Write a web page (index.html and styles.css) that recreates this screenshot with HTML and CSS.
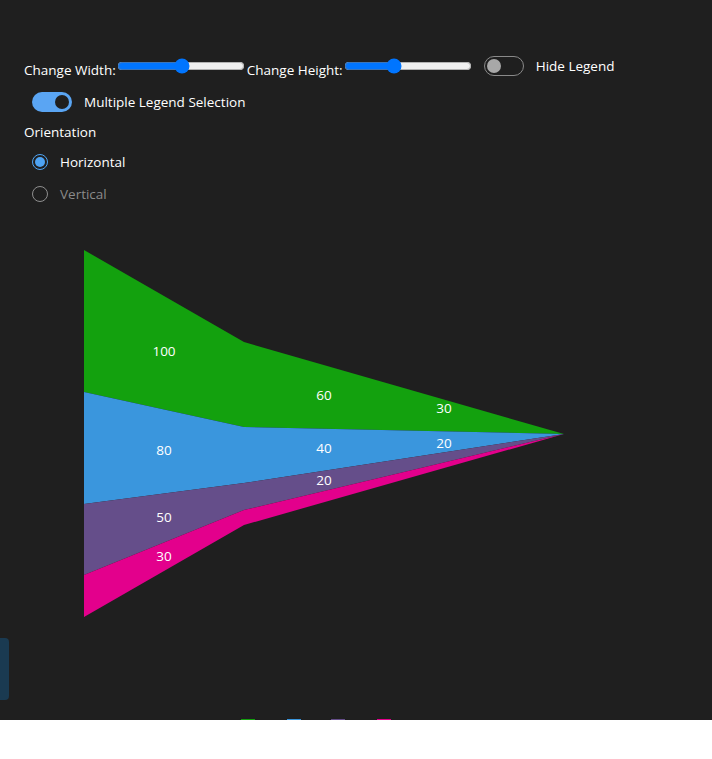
FILE: index.html
```html
<!DOCTYPE html>
<html lang="en">
<head>
<meta charset="utf-8">
<title>Funnel Area Chart</title>
<link rel="stylesheet" href="styles.css">
</head>
<body>
<div class="app">
  <div class="controls">
    <div class="row row-top">
      <span class="ctl-label">Change Width:</span>
      <input class="range" type="range" min="0" max="100" value="51">
      <span class="ctl-label">Change Height:</span>
      <input class="range" type="range" min="0" max="100" value="38">
      <span class="toggle toggle-off"><span class="knob"></span></span>
      <span class="toggle-text">Hide Legend</span>
    </div>
    <div class="row row-multi">
      <span class="toggle toggle-on"><span class="knob"></span></span>
      <span class="toggle-text">Multiple Legend Selection</span>
    </div>
    <div class="row heading">Orientation</div>
    <div class="row radio-row">
      <span class="radio checked"><span class="dot"></span></span>
      <span class="radio-text">Horizontal</span>
    </div>
    <div class="row radio-row second">
      <span class="radio"></span>
      <span class="radio-text muted">Vertical</span>
    </div>
  </div>

  <svg class="chart" width="712" height="489" viewBox="0 230 712 489">
    <polygon fill="#13a10e" points="84,250 244,342 564,434 244,427 84,392"/>
    <polygon fill="#3a96dd" points="84,392 244,427 564,434 244,483 84,504"/>
    <polygon fill="#654e8a" points="84,504 244,483 564,434 244,510 84,575"/>
    <polygon fill="#e3008c" points="84,575 244,510 564,434 244,525 84,617"/>
    <g class="labels" text-anchor="middle" dominant-baseline="central">
      <text x="164" y="351">100</text>
      <text x="324" y="395">60</text>
      <text x="444" y="408">30</text>
      <text x="164" y="450">80</text>
      <text x="324" y="448">40</text>
      <text x="444" y="443">20</text>
      <text x="164" y="517">50</text>
      <text x="324" y="480">20</text>
      <text x="164" y="556">30</text>
    </g>
  </svg>

  <div class="legend">
    <span class="swatch sw-green"></span>
    <span class="swatch sw-blue"></span>
    <span class="swatch sw-purple"></span>
    <span class="swatch sw-pink"></span>
  </div>

  <div class="side-tab"></div>
</div>
</body>
</html>
```
FILE: styles.css
```css
html, body {
  margin: 0;
  padding: 0;
  background: #ffffff;
}

body {
  font-family: "Open Sans", "Noto Sans", sans-serif;
  font-size: 13.5px;
  color: #ffffff;
}

.app {
  position: relative;
  height: 720px;
  overflow: hidden;
  background: #1f1f1f;
  padding-top: 56px;
  box-sizing: border-box;
}

.controls {
  padding-left: 24px;
}

.row {
  display: flex;
  align-items: center;
  height: 20px;
}

.row-top .ctl-label {
  padding-top: 8px;
  white-space: nowrap;
}

.range {
  width: 128px;
  height: 16px;
  margin: 0 2px 0 1px;
  accent-color: #0075ff;
}

.toggle {
  position: relative;
  display: inline-block;
  width: 40px;
  height: 20px;
  border-radius: 10px;
  box-sizing: border-box;
  flex: none;
}

.toggle .knob {
  position: absolute;
  top: 3px;
  width: 14px;
  height: 14px;
  border-radius: 50%;
}

.toggle-off {
  border: 1px solid #8a8a8a;
  margin-left: 10px;
}

.toggle-off .knob {
  left: 2px;
  top: 2px;
  background: #a8a8a8;
}

.toggle-on {
  background: #5aa5f3;
  margin-left: 8px;
}

.toggle-on .knob {
  right: 3px;
  background: #1f1f1f;
}

.toggle-text {
  margin-left: 12px;
  white-space: nowrap;
}

.row-multi {
  margin-top: 16px;
}

.heading {
  margin-top: 10px;
}

.radio-row {
  margin-top: 10px;
  padding-left: 8px;
}

.radio-row.second {
  margin-top: 12px;
}

.radio {
  position: relative;
  display: inline-flex;
  align-items: center;
  justify-content: center;
  width: 16px;
  height: 16px;
  border-radius: 50%;
  border: 1px solid #8f8f8f;
  box-sizing: border-box;
  flex: none;
}

.radio.checked {
  border: 1.5px solid #4ea3f3;
}

.radio .dot {
  width: 10px;
  height: 10px;
  border-radius: 50%;
  background: #4ea3f3;
}

.radio-text {
  margin-left: 12px;
}

.radio-text.muted {
  color: #8a8a8a;
}

.chart {
  display: block;
  margin-top: 26px;
}

.labels text {
  fill: #ffffff;
  font-family: "Open Sans", "Noto Sans", sans-serif;
  font-size: 13.5px;
}

.legend {
  display: flex;
  padding-left: 241px;
}

.swatch {
  width: 14px;
  height: 14px;
  flex: none;
}

.sw-green { background: #13a10e; }
.sw-blue { background: #3a96dd; margin-left: 32px; }
.sw-purple { background: #654e8a; margin-left: 30px; }
.sw-pink { background: #e3008c; margin-left: 32px; }

.side-tab {
  position: absolute;
  left: 0;
  top: 638px;
  width: 9px;
  height: 62px;
  border-radius: 0 4px 4px 0;
  background: #1a3a51;
}
```
